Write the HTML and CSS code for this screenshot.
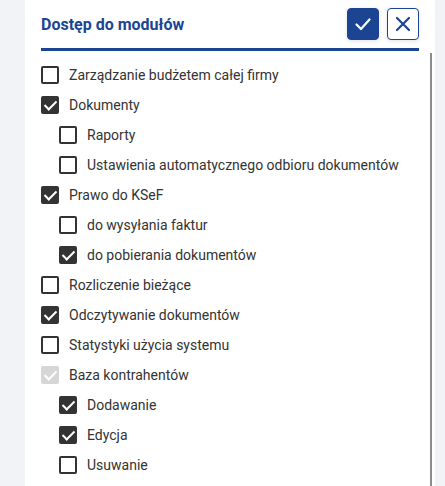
FILE: index.html
```html
<!DOCTYPE html>
<html lang="pl">
<head>
<meta charset="utf-8">
<title>Dostęp do modułów</title>
<link rel="stylesheet" href="styles.css">
</head>
<body>
<div class="panel">
  <div class="header">
    <h2 class="title">Dostęp do modułów</h2>
    <div class="actions">
      <button class="btn btn-ok" aria-label="Zapisz">
        <svg width="20" height="20" viewBox="0 0 20 20"><path d="M3.5 10.5 L8 15 L16.5 5.5" fill="none" stroke="#fff" stroke-width="2.2" stroke-linecap="round" stroke-linejoin="round"/></svg>
      </button>
      <button class="btn btn-cancel" aria-label="Anuluj">
        <svg width="20" height="20" viewBox="0 0 20 20"><path d="M4 4 L16 16 M16 4 L4 16" fill="none" stroke="#1b4592" stroke-width="2.2" stroke-linecap="round"/></svg>
      </button>
    </div>
  </div>
  <div class="rule"></div>
  <div class="list">
    <label class="row"><span class="cb"></span>Zarządzanie budżetem całej firmy</label>
    <label class="row"><span class="cb checked"></span>Dokumenty</label>
    <label class="row child"><span class="cb"></span>Raporty</label>
    <label class="row child"><span class="cb"></span>Ustawienia automatycznego odbioru dokumentów</label>
    <label class="row"><span class="cb checked"></span>Prawo do KSeF</label>
    <label class="row child"><span class="cb"></span>do wysyłania faktur</label>
    <label class="row child"><span class="cb checked"></span>do pobierania dokumentów</label>
    <label class="row"><span class="cb"></span>Rozliczenie bieżące</label>
    <label class="row"><span class="cb checked"></span>Odczytywanie dokumentów</label>
    <label class="row"><span class="cb"></span>Statystyki użycia systemu</label>
    <label class="row"><span class="cb disabled"></span>Baza kontrahentów</label>
    <label class="row child"><span class="cb checked"></span>Dodawanie</label>
    <label class="row child"><span class="cb checked"></span>Edycja</label>
    <label class="row child"><span class="cb"></span>Usuwanie</label>
  </div>
</div>
</body>
</html>
```
FILE: styles.css
```css
html, body {
  margin: 0;
  padding: 0;
  background: #f2f3f7;
  font-family: Roboto, "Liberation Sans", sans-serif;
}

.panel {
  margin-left: 25px;
  width: 378px;
  min-height: 478px;
  background: #ffffff;
  padding: 8px 16px 0 16px;
}

.header {
  display: flex;
  align-items: center;
  justify-content: space-between;
  height: 32px;
}

.title {
  margin: 0;
  font-size: 16px;
  font-weight: 700;
  color: #1b4592;
}

.actions {
  display: flex;
  gap: 8px;
}

.btn {
  width: 32px;
  height: 32px;
  box-sizing: border-box;
  border-radius: 4px;
  padding: 0;
  display: flex;
  align-items: center;
  justify-content: center;
  cursor: pointer;
  box-shadow: 0 1px 4px rgba(0, 0, 0, 0.12);
}

.btn-ok {
  background: #1b4592;
  border: 1px solid #1b4592;
}

.btn-cancel {
  background: #ffffff;
  border: 1px solid #1b4592;
}

.rule {
  height: 3px;
  background: #1b4592;
  margin-top: 8px;
}

.list {
  margin-top: 2px;
  margin-right: -13px;
  padding-top: 7px;
  border-right: 2px solid #8c8c8c;
  min-height: 426px;
}

.row {
  display: flex;
  align-items: center;
  height: 30px;
  font-size: 14px;
  color: #333333;
  gap: 10px;
}

.row.child {
  padding-left: 18px;
}

.cb {
  width: 18px;
  height: 18px;
  box-sizing: border-box;
  border: 2px solid #333333;
  border-radius: 2px;
  flex: none;
  position: relative;
  background: #ffffff;
}

.cb.checked {
  background: #333333;
}

.cb.disabled {
  background: #d6d6d6;
  border-color: #d6d6d6;
}

.cb.checked::after,
.cb.disabled::after {
  content: "";
  position: absolute;
  left: 4px;
  top: 0px;
  width: 5px;
  height: 10px;
  border-right: 2px solid #ffffff;
  border-bottom: 2px solid #ffffff;
  transform: rotate(45deg);
}
```
